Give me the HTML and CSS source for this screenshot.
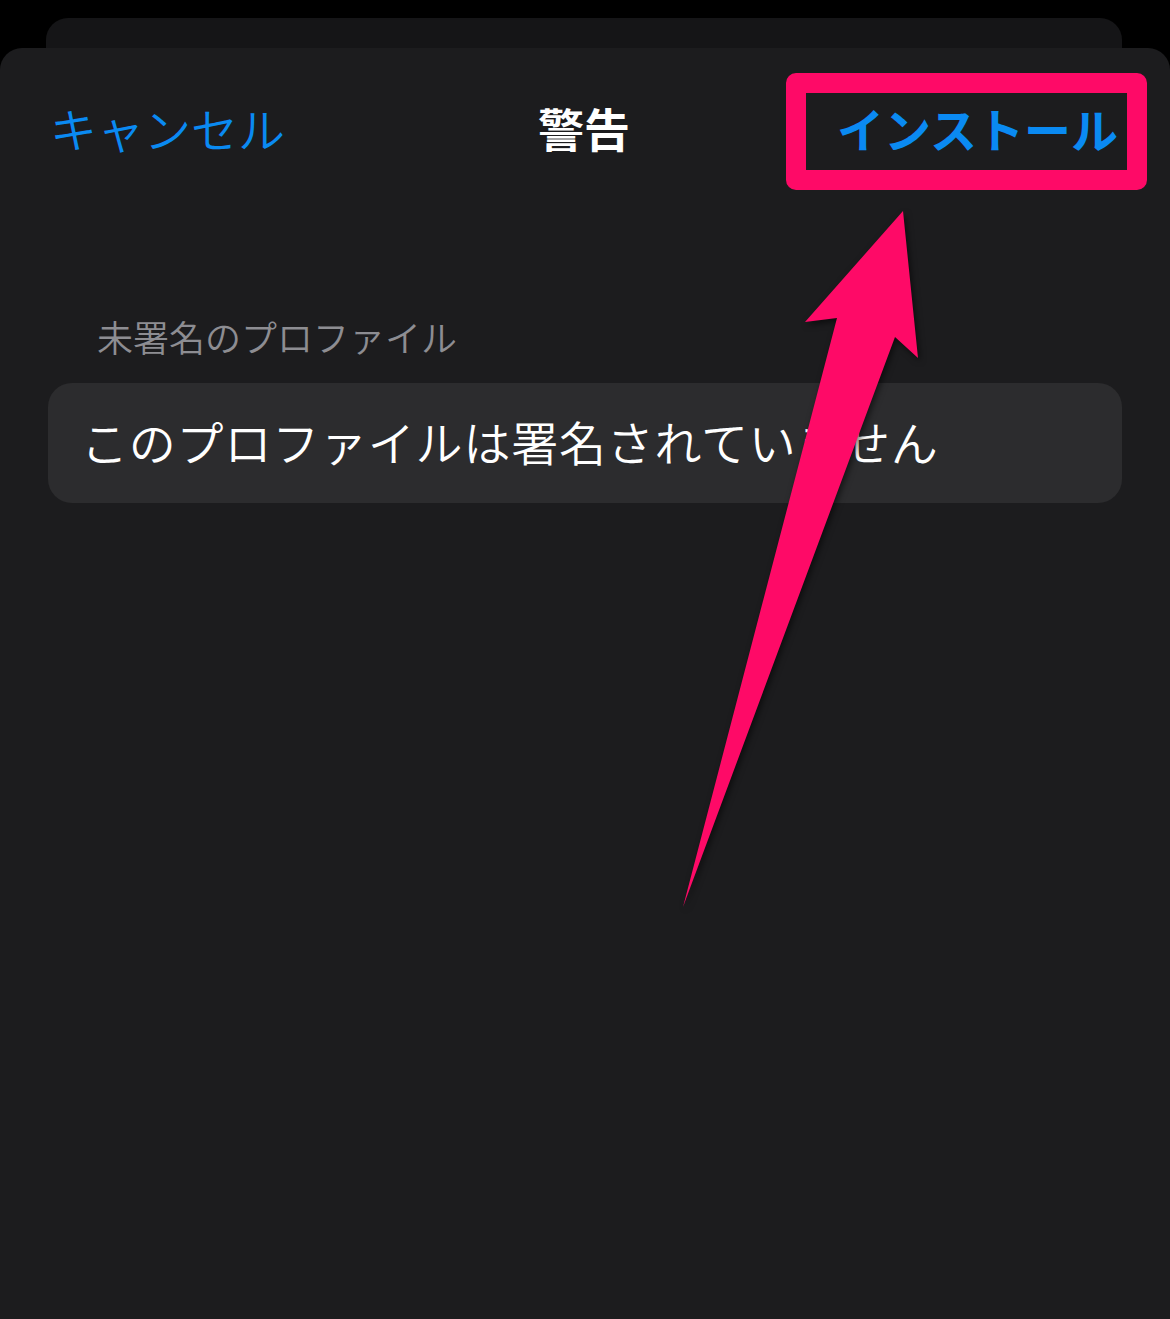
FILE: index.html
```html
<!DOCTYPE html>
<html lang="ja">
<head>
<meta charset="utf-8">
<title>警告</title>
<link rel="stylesheet" href="styles.css">
</head>
<body>
<div class="page">
  <div class="backcard"></div>
  <div class="sheet">
    <header class="navbar">
      <span class="nav-btn nav-left">キャンセル</span>
      <span class="nav-title">警告</span>
      <span class="nav-btn nav-right">インストール</span>
    </header>
    <div class="section-header">未署名のプロファイル</div>
    <div class="card">このプロファイルは署名されていません</div>
  </div>
  <div class="highlight-box"></div>
  <svg class="arrow" width="1170" height="1319" viewBox="0 0 1170 1319" xmlns="http://www.w3.org/2000/svg">
    <polygon points="683,907 837,318 805,322 903,211 918,358 895,337" fill="#fe0a67"/>
  </svg>
</div>
</body>
</html>
```
FILE: styles.css
```css
html, body {
  margin: 0;
  padding: 0;
  background: #000;
}
body {
  font-family: "Noto Sans CJK JP", "Noto Sans", sans-serif;
}
.page {
  position: relative;
  width: 1170px;
  height: 1319px;
  overflow: hidden;
  padding-top: 18px;
  box-sizing: border-box;
}
.backcard {
  height: 30px;
  margin: 0 48px 0 46px;
  background: #151517;
  border-radius: 22px 22px 0 0;
}
.sheet {
  background: #1c1c1e;
  border-radius: 22px 22px 0 0;
  height: 1271px;
}
.navbar {
  height: 164px;
  box-sizing: border-box;
  display: grid;
  grid-template-columns: 1fr auto 1fr;
  align-items: center;
  padding: 0 52px 6px 50px;
}
.nav-btn {
  font-size: 47px;
  color: #0a8af2;
  line-height: 1;
  font-weight: 350;
}
.nav-left {
  justify-self: start;
}
.nav-right {
  justify-self: end;
  font-weight: 700;
}
.nav-title {
  font-size: 46px;
  font-weight: 700;
  color: #fff;
  line-height: 1;
}
.section-header {
  margin-top: 100px;
  padding-left: 97px;
  font-size: 36px;
  line-height: 48px;
  font-weight: 350;
  color: #8d8d92;
}
.card {
  margin: 23px 48px 0 48px;
  height: 120px;
  box-sizing: border-box;
  padding: 0 0 5px 33px;
  border-radius: 24px;
  background: #2c2c2e;
  display: flex;
  align-items: center;
  font-size: 47px;
  font-weight: 350;
  letter-spacing: 0.8px;
  color: #fff;
}
.highlight-box {
  position: absolute;
  left: 786px;
  top: 73px;
  width: 361px;
  height: 117px;
  box-sizing: border-box;
  border: 20px solid #fe0a67;
  border-radius: 10px;
}
.arrow {
  position: absolute;
  left: 0;
  top: 0;
  filter: drop-shadow(2px 3px 3px rgba(0, 0, 0, 0.55));
}
```
